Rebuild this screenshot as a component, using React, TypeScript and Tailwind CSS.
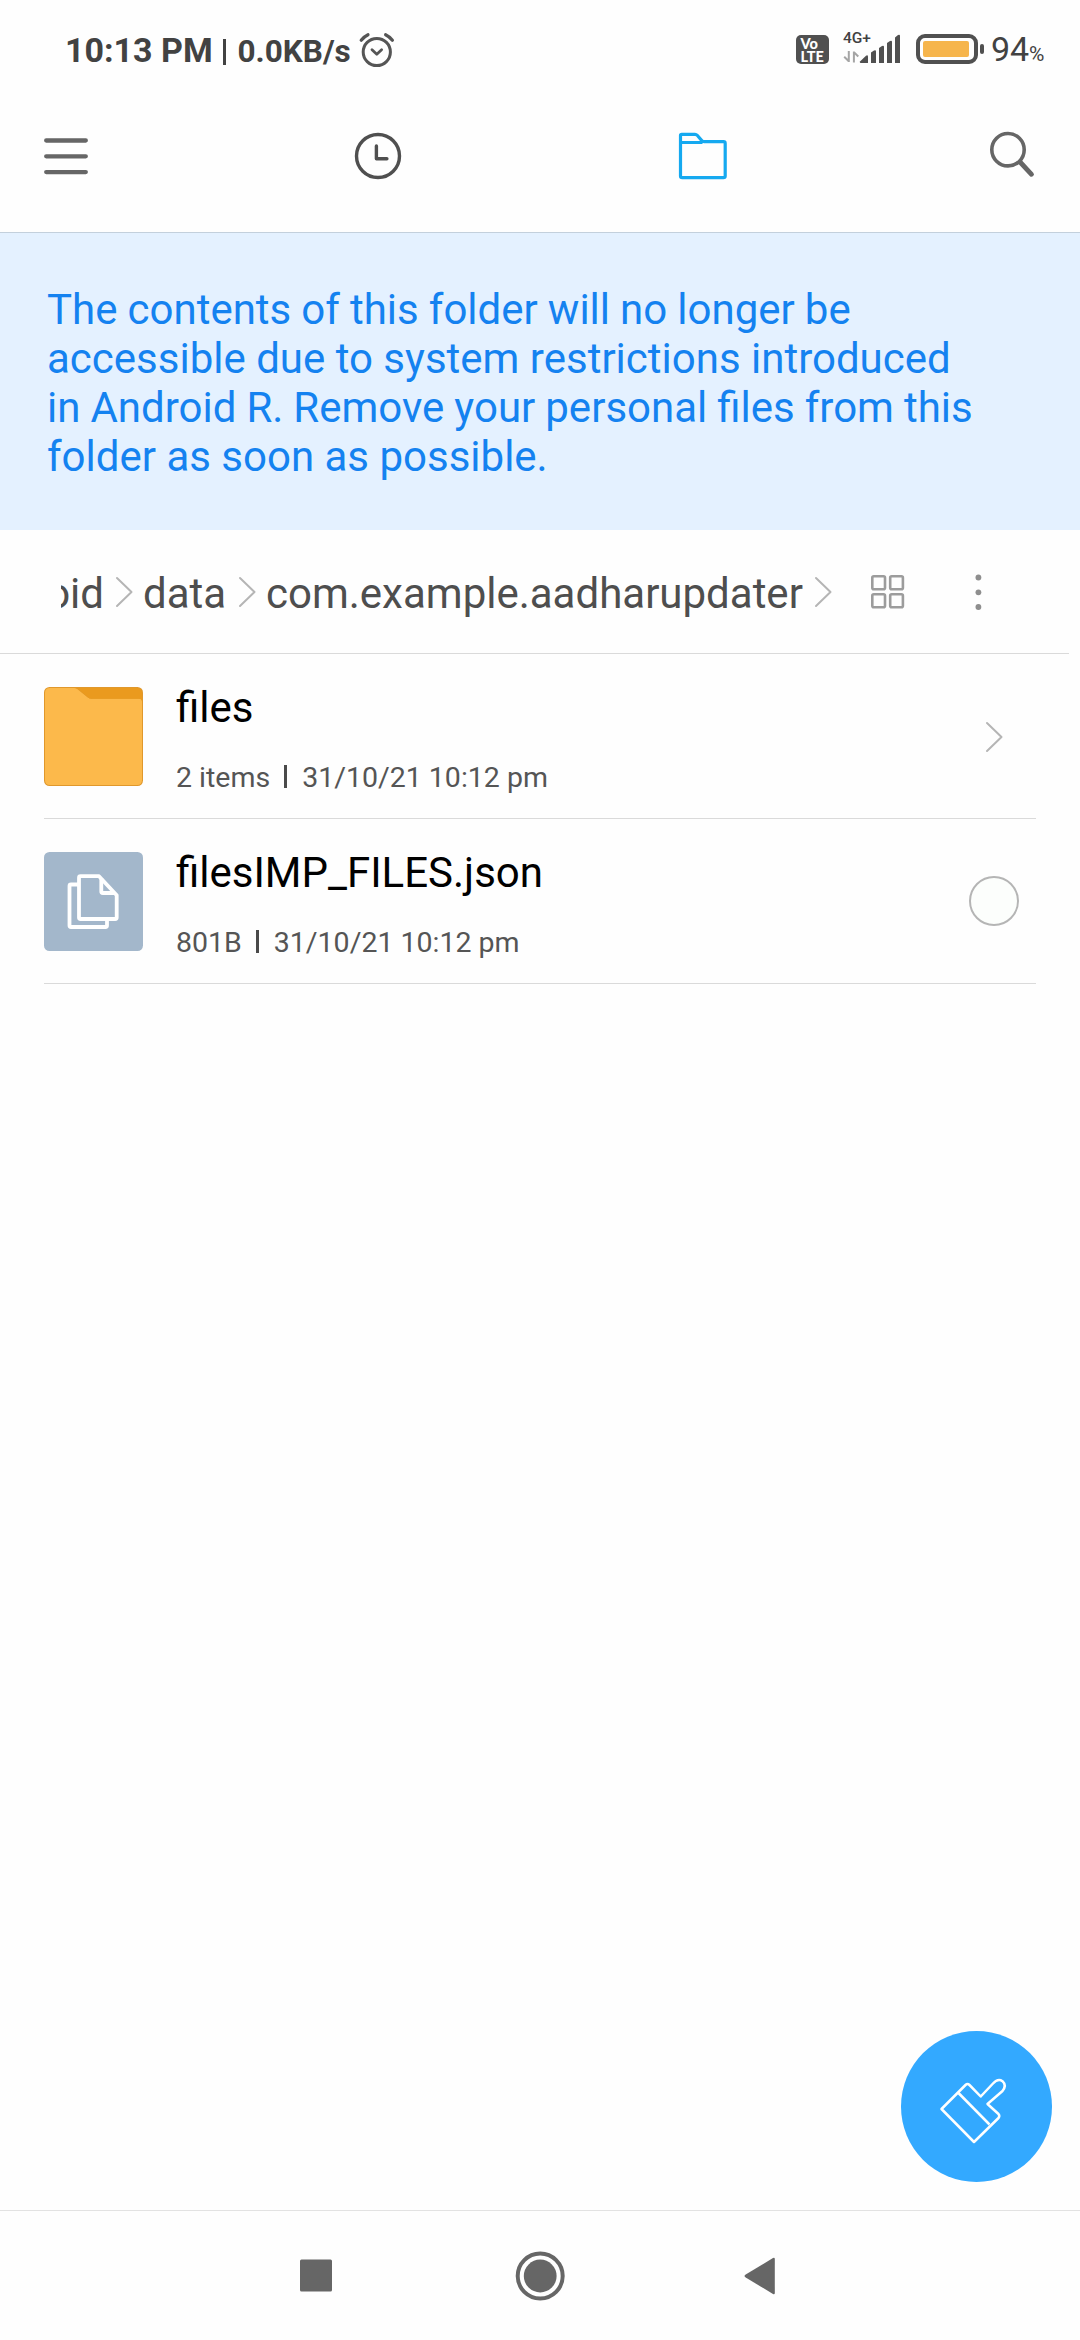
import type { ReactNode } from "react";

function StatusBar() {
  return (
    <div className="flex h-[100px] items-start pl-[65px] text-[#424242]">
      <div className="mt-[30px] flex w-[292px] items-baseline whitespace-nowrap font-bold leading-[40px]">
        <span className="w-[158px] text-[34px]">10:13 PM</span>
        <span className="h-[26px] w-[2.5px] translate-y-[1px] self-center bg-[#424242]" />
        <span className="ml-[12px] text-[31.500px]">0.0KB/s</span>
      </div>
      <svg className="mt-[30px] h-10 w-10" viewBox="0 0 40 40" fill="none" stroke="#555" strokeWidth="3" strokeLinecap="round">
        <circle cx="19.8" cy="22" r="13.6" />
        <path d="M15 19.8l4.8 4.4 4.8-4.4" strokeWidth="2.8" strokeLinejoin="round" />
        <path d="M4.2 10.3Q7 6.600 11 4.700M35.400 10.300Q32.600 6.600 28.600 4.700" strokeWidth="3.2" />
      </svg>
      <div className="ml-[399px] mt-[35px] h-[29px] w-[33px] rounded-[5px] bg-[#505050] pl-[4.500px] pt-[1.500px] font-['Lato'] text-[14.500px] font-black leading-[13px] text-white">
        Vo
        <br />
        LTE
      </div>
      <div className="ml-[14px] mt-[30px] flex h-10 w-[60px] flex-col">
        <span className="h-[13px] text-[15.500px] font-medium leading-[17px]">4G+</span>
        <svg className="-mt-[13px] h-10 w-[60px] shrink-0" viewBox="0 0 60 40" fill="#505050">
          <path d="M5.800 21v11M1.200 26.800l4.600 4.400M10.900 32.500V21.500M10.900 22.300l4.400 4.200" fill="none" stroke="#a5a5a5" strokeWidth="2" />
          <path d="M17 31.500l6-5.800q1.800-1 2 .8v6.500h-7q-1.800 0-1-1.500z" />
          <path d="M28 22.500l3-2q2-1 2 1v11.500h-5zM36 18l3-2q2-1 2 1v16h-5zM44 13l3-2q2-1 2 1v21h-5zM52 7.500l3-2.500q2-1 2 1v27h-5z" />
        </svg>
      </div>
      <svg className="ml-[12px] mt-[30px] h-10 w-[72px]" viewBox="0 0 72 40">
        <rect x="3" y="6" width="58" height="26" rx="7" fill="none" stroke="#505050" strokeWidth="4" />
        <rect x="8" y="11" width="46" height="16" rx="2" fill="#f6b54c" />
        <rect x="65" y="14" width="4" height="10" rx="2" fill="#505050" />
      </svg>
      <div className="ml-[4px] mt-[29px] flex items-baseline leading-[40px]">
        <span className="w-[38px] text-[34px]">94</span>
        <span className="text-[21px]">%</span>
      </div>
    </div>
  );
}

function Toolbar() {
  return (
    <div className="flex h-[132px] items-center pb-5 pl-9">
      <svg className="h-[60px] w-[60px]" viewBox="0 0 60 60" stroke="#666" strokeWidth="4.300" strokeLinecap="round">
        <path d="M10.200 14.500h39.600M10.200 30.300h39.600M10.200 46.100h39.600" />
      </svg>
      <svg className="ml-[252px] h-[60px] w-[60px]" viewBox="0 0 60 60" fill="none" stroke="#4f4f4f" strokeWidth="3.400" strokeLinecap="round" strokeLinejoin="round">
        <circle cx="30" cy="30" r="21.500" />
        <path d="M28.400 20v12.700h10.500" />
      </svg>
      <svg className="ml-[264px] h-[60px] w-[60px]" viewBox="0 0 60 60" fill="none" stroke="#15a9f0" strokeWidth="3.200" strokeLinejoin="round">
        <path d="M8.500 16.500v-7q0-1.200 1.200-1.200h13.300q1.300 0 2.200 1l4.600 5.300q.9 1.100 2.200 1.100h19.500q1.700 0 1.700 1.700v32.500q0 1.700-1.700 1.700h-41.300q-1.700 0-1.700-1.700zM8.500 16.500h22" />
      </svg>
      <svg className="ml-[258px] h-[60px] w-[60px]" viewBox="0 0 60 60" fill="none" stroke="#666" strokeLinecap="round">
        <circle cx="18" cy="23.700" r="16.200" strokeWidth="3.600" />
        <path d="M30.500 36.500L41.500 48.300" strokeWidth="4.800" />
      </svg>
    </div>
  );
}

function Chevron({ className }: { className: string }) {
  return (
    <svg className={`h-8 w-5 shrink-0 ${className}`} viewBox="0 0 20 32" fill="none" stroke="#b5b5b5" strokeWidth="2" strokeLinecap="round" strokeLinejoin="round">
      <path d="M3 2l14.500 14L3 30" />
    </svg>
  );
}

function Breadcrumb() {
  return (
    <div className="mr-[11px] flex h-[124px] items-center border-b border-[#dadada] pl-[61px] pt-[1px] text-[42px] leading-[49px] text-[#4e4e4e]">
      <span className="flex w-[43px] translate-y-[1px] justify-end overflow-hidden">Android</span>
      <Chevron className="ml-[10px]" />
      <span className="ml-[9px] w-[83px] translate-y-[1px]">data</span>
      <Chevron className="ml-[11px]" />
      <span className="ml-[9px] w-[538px] translate-y-[1px]">com.example.aadharupdater</span>
      <Chevron className="ml-[9px]" />
      <svg className="ml-[35px] h-10 w-10" viewBox="0 0 40 40" fill="none" stroke="#9c9c9c" strokeWidth="2.600">
        <rect x="4.300" y="4.300" width="12.700" height="13" rx="1.500" />
        <rect x="22.200" y="4.300" width="12.700" height="13" rx="1.500" />
        <rect x="4.300" y="22.300" width="12.700" height="13" rx="1.500" />
        <rect x="22.200" y="22.300" width="12.700" height="13" rx="1.500" />
      </svg>
      <svg className="ml-[50px] h-10 w-10" viewBox="0 0 40 40" fill="#8e8e8e">
        <circle cx="20.400" cy="5.500" r="2.900" />
        <circle cx="20.400" cy="20.300" r="2.900" />
        <circle cx="20.400" cy="35" r="2.900" />
      </svg>
    </div>
  );
}

function FolderIcon() {
  return (
    <svg className="h-[99px] w-[99px]" viewBox="0 0 99 99">
      <rect width="99" height="99" rx="5.500" fill="#e0982c" />
      <path d="M1 6q0-5 5-5h24q2 0 3.500 1.200l10 8q2 1.600 4 1.600h47.500q3 0 3 3v78.200q0 5-5 5H6q-5 0-5-5z" fill="#fcb94b" />
      <path d="M31 1h61.500q5.500 0 5.500 5v8q0-2.200-2.500-2.200h-48q-2 0-3.500-1.200l-9.500-8q-1.500-1.400-3.500-1.600z" fill="#ea9a1e" />
    </svg>
  );
}

function DocumentsIcon() {
  return (
    <svg className="h-[99px] w-[99px]" viewBox="0 0 99 99" fill="none">
      <rect width="99" height="99" rx="5.500" fill="#a3b7cb" />
      <g stroke="#fff" strokeWidth="3.800" strokeLinejoin="round">
        <path d="M34.500 32.500h-7.500q-1.500 0-1.500 1.500v39.500q0 1.500 1.500 1.500h34.500q1.500 0 1.500-1.500v-5.500" />
        <path d="M36.500 24.200h18.500l17.700 19v22.300q0 1.500-1.500 1.500h-34.700q-1.500 0-1.500-1.500v-39.800q0-1.500 1.500-1.500z" />
        <path d="M57.300 26v13.500q0 1.500 1.500 1.500h12" />
      </g>
    </svg>
  );
}

type RowProps = { icon: ReactNode; name: string; size: string; date: string; action: ReactNode };

function FileRow({ icon, name, size, date, action }: RowProps) {
  return (
    <div className="mx-[44px] flex h-[165px] items-start border-b border-[#dadada] pt-[33px]">
      {icon}
      <div className="-mt-[4px] ml-[33px] flex-1">
        <div className="text-[42px] leading-[49px] text-black">{name}</div>
        <div className="mt-[28px] flex h-[36px] items-center whitespace-nowrap text-[28.500px] leading-[36px] text-[#555]">
          <span>{size}</span>
          <span className="-mt-[3px] ml-[14px] mr-[15px] h-[23px] w-[3px] bg-[#4a4a4a]" />
          <span>{date}</span>
        </div>
      </div>
      <div className="flex h-[99px] w-[84px] items-center justify-center">{action}</div>
    </div>
  );
}

function CleanButton() {
  return (
    <button className="absolute bottom-[158px] right-[28px] h-[151px] w-[151px] rounded-full bg-[#33a9ff]">
      <svg className="h-[151px] w-[151px]" viewBox="0 0 151 151" fill="none" stroke="#fff" strokeWidth="2.500" strokeLinejoin="round">
        <path d="M40.500 78L64.500 54q2-2 4 0L79.700 65.500 92 52.500q5-5.500 9.500-2.300 4.500 4.300 0 9.800L86.500 73l11 10q1.600 1.800 0 4L73 111z" />
        <path d="M57.500 62L88.500 93.500" />
      </svg>
    </button>
  );
}

function NavigationBar() {
  return (
    <div className="flex h-[130px] items-center justify-center border-t border-[#e2e2e2]">
      <svg className="h-[50px] w-[50px]" viewBox="0 0 50 50" fill="#666">
        <rect x="9" y="8.500" width="32" height="32" rx="1.500" />
      </svg>
      <svg className="ml-[174px] h-[50px] w-[50px]" viewBox="0 0 50 50">
        <circle cx="25.200" cy="25" r="22.500" fill="none" stroke="#666" strokeWidth="4" />
        <circle cx="25.200" cy="25" r="16.400" fill="#666" />
      </svg>
      <svg className="ml-[174px] h-[50px] w-[50px]" viewBox="0 0 50 50" fill="#666">
        <path d="M6.700 23.500L34 7q1.800-.8 1.800 1v34q0 1.800-1.800 1L6.700 26.500q-2.400-1.500 0-3z" />
      </svg>
    </div>
  );
}

export default function App() {
  return (
    <div className="relative flex h-[2340px] w-[1080px] flex-col overflow-hidden bg-[#fefefe] font-['Roboto',sans-serif]">
      <StatusBar />
      <Toolbar />
      <div className="h-[298px] border-t border-[#c3d0dc] bg-[#e4f1ff] pl-[47px] pt-[52px] text-[42px] leading-[49px] text-[#1482f0]">
        <span className="[word-spacing:-0.35px]">The contents of this folder will no longer be</span>
        <br />
        accessible due to system restrictions introduced
        <br />
        <span className="[word-spacing:-0.4px]">in Android R. Remove your personal files from this</span>
        <br />
        folder as soon as possible.
      </div>
      <Breadcrumb />
      <FileRow icon={<FolderIcon />} name="files" size="2 items" date="31/10/21 10:12 pm" action={<Chevron className="" />} />
      <FileRow
        icon={<DocumentsIcon />}
        name="filesIMP_FILES.json"
        size="801B"
        date="31/10/21 10:12 pm"
        action={<span className="-mt-px h-[50px] w-[50px] rounded-full border-2 border-[#b5b5b5] bg-[#fcfefc]" />}
      />
      <div className="flex-1" />
      <CleanButton />
      <NavigationBar />
    </div>
  );
}
